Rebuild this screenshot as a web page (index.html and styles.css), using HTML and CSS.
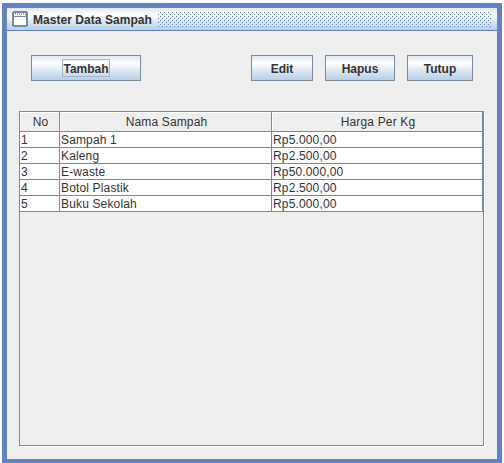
FILE: index.html
```
<!DOCTYPE html>
<html lang="id">
<head>
<meta charset="utf-8">
<title>Master Data Sampah</title>
<link rel="stylesheet" href="styles.css">
</head>
<body>
<main class="frame">
  <header class="titlebar">
    <svg class="icon" width="16" height="16" viewBox="0 0 16 16" shape-rendering="crispEdges">
      <path fill="#7a8a99" d="M1 0h14v1h1v14h-1v1H1v-1H0V1h1z"/>
      <path fill="#fff" d="M2 2h12v3H2zM2 6h12v8H2z"/>
      <path fill="#6382bf" d="M3 2h1v1h-1zM7 2h1v1h-1zM11 2h1v1h-1zM5 3h1v1h-1zM9 3h1v1h-1zM13 3h1v1h-1z"/>
      <path fill="#b8cfe5" d="M3 3h1v1h-1zM7 3h1v1h-1zM11 3h1v1h-1zM5 2h1v1h-1zM9 2h1v1h-1zM13 2h1v1h-1z"/>
    </svg>
    <h1 class="title">Master Data Sampah</h1>
    <svg class="bumps" width="333" height="15" shape-rendering="crispEdges">
      <defs>
        <pattern id="bump" width="4" height="4" patternUnits="userSpaceOnUse">
          <path fill="#6382bf" d="M2 0h1v1h-1zM0 2h1v1H0z"/>
          <path fill="#fff" opacity=".6" d="M3 1h1v1h-1zM1 3h1v1H1z"/>
        </pattern>
      </defs>
      <rect width="333" height="15" fill="url(#bump)"/>
    </svg>
  </header>
  <div class="toolbar">
    <button class="btn add"><span class="focus">Tambah</span></button>
    <button class="btn edit">Edit</button>
    <button class="btn delete">Hapus</button>
    <button class="btn close">Tutup</button>
  </div>
  <section class="pane">
    <div class="row head"><span>No</span><span>Nama Sampah</span><span>Harga Per Kg</span></div>
    <div class="row"><span>1</span><span>Sampah 1</span><span>Rp5.000,00</span></div>
    <div class="row"><span>2</span><span>Kaleng</span><span>Rp2.500,00</span></div>
    <div class="row"><span>3</span><span>E-waste</span><span>Rp50.000,00</span></div>
    <div class="row"><span>4</span><span>Botol Plastik</span><span>Rp2.500,00</span></div>
    <div class="row"><span>5</span><span>Buku Sekolah</span><span>Rp5.000,00</span></div>
  </section>
</main>
</body>
</html>
```
FILE: styles.css
```
* { box-sizing: border-box; }
body {
  margin: 0;
  padding: 3px 2px 0;
  height: 463px;
  overflow: hidden;
  background: #fff;
  color: #333;
  font: 12px/15px "Liberation Sans", Arial, sans-serif;
}
.frame {
  height: 460px;
  border: 5px solid #6382bf;
  border-bottom-width: 4px;
  border-radius: 1px 1px 0 0;
  background: #eee;
}
.titlebar {
  display: flex;
  height: 23px;
  padding: 3px 6px 0 5px;
  border-bottom: 1px solid #6382bf;
  background: linear-gradient(#dde8f3 0, #fff 30%, #dde8f3 60%, #b8cfe5 100%);
}
.icon { flex: none; }
.title {
  flex: none;
  width: 125px;
  margin: 1px 0 0 5px;
  font-size: 12px;
  line-height: 16px;
  letter-spacing: .05px;
  white-space: nowrap;
}
.bumps { flex: none; margin-top: 1px; }
.toolbar {
  display: flex;
  padding: 24px 24px 0;
}
.btn {
  height: 26px;
  margin: 0 0 0 12px;
  padding: 2px 0 0;
  display: flex;
  align-items: center;
  justify-content: center;
  border: 1px solid #7a8a99;
  border-radius: 0;
  background: linear-gradient(#dde8f3 0, #fff 30%, #dde8f3 60%, #b8cfe5 100%);
  color: #333;
  font: bold 12px/16px "Liberation Sans", Arial, sans-serif;
}
.add { width: 110px; margin: 0 98px 0 0; padding: 0; }
.edit { width: 62px; }
.delete { width: 70px; }
.close { width: 66px; }
.focus {
  width: 48px;
  height: 18px;
  padding-top: 1px;
  line-height: 16px;
  border: 1px solid #a3b8cc;
}
.pane {
  width: 465px;
  height: 335px;
  margin: 30px 0 0 12px;
  border: 1px solid #7a8a99;
  box-shadow: 1px 1px 0 #fff;
}
.row {
  display: grid;
  grid-template-columns: 40px 212px 211px;
  grid-template-rows: 100%;
  height: 16px;
  background: #fff;
}
.row span {
  padding: 1px 0 0 1px;
  border-right: 1px solid #7a8a99;
  border-bottom: 1px solid #7a8a99;
  letter-spacing: .15px;
  white-space: nowrap;
}
.row.head { height: 20px; background: #eee; }
.row.head span {
  padding: 3px 0 0 2px;
  box-shadow: inset 1px 1px 0 #fff;
  text-align: center;
}
```
